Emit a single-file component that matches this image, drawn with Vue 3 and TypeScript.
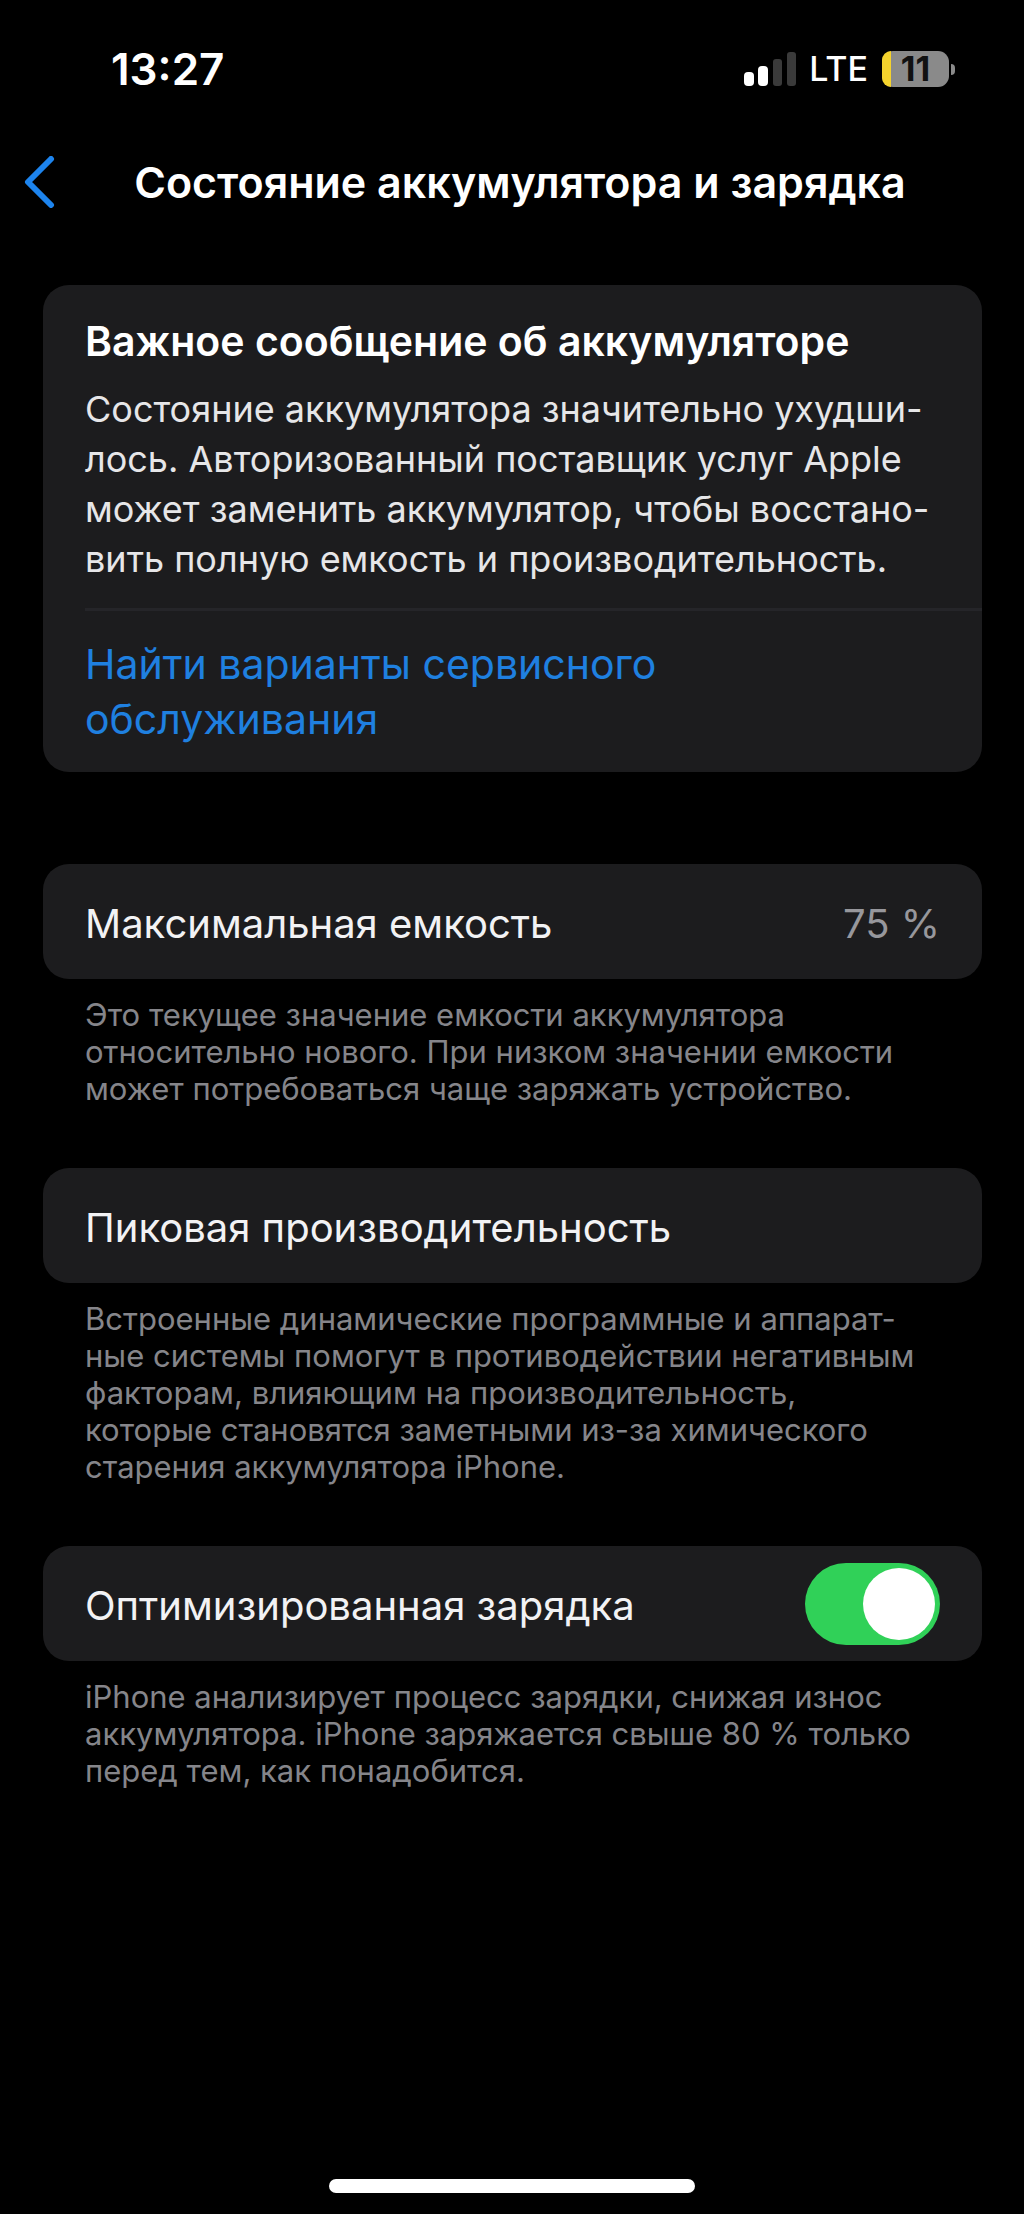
<script setup lang="ts">
import { ref } from 'vue'

const optimizedCharging = ref(true)
const batteryLevel = 11

const notice =
  'Состояние аккумулятора значительно ухудши-\nлось. Авторизованный поставщик услуг Apple\nможет заменить аккумулятор, чтобы восстано-\nвить полную емкость и производительность.'
const capacityNote =
  'Это текущее значение емкости аккумулятора\nотносительно нового. При низком значении емкости\nможет потребоваться чаще заряжать устройство.'
const peakNote =
  'Встроенные динамические программные и аппарат-\nные системы помогут в противодействии негативным\nфакторам, влияющим на производительность,\nкоторые становятся заметными из-за химического\nстарения аккумулятора iPhone.'
const chargingNote =
  'iPhone анализирует процесс зарядки, снижая износ\nаккумулятора. iPhone заряжается свыше 80 % только\nперед тем, как понадобится.'
</script>

<template>
  <div class="screen">
    <div class="status">
      <span class="time">13:27</span>
      <div class="indicators">
        <svg class="signal" width="54" height="36" viewBox="0 0 54 36" aria-hidden="true">
          <rect x="0" y="21" width="10" height="14" rx="4" fill="#fff" />
          <rect x="14" y="15" width="10" height="20" rx="4" fill="#fff" />
          <rect x="29" y="8" width="9" height="27" rx="3" fill="#3a3a3a" />
          <rect x="43" y="1" width="9" height="34" rx="3" fill="#3a3a3a" />
        </svg>
        <span class="network">LTE</span>
        <div class="battery">
          <div class="cell">
            <div class="charge" :style="{ width: batteryLevel + 3 + '%' }"></div>
            <span class="level">{{ batteryLevel }}</span>
          </div>
          <div class="terminal"></div>
        </div>
      </div>
    </div>

    <header class="nav">
      <button class="back" type="button" aria-label="Назад">
        <svg width="32" height="52" viewBox="0 0 32 52" fill="none" aria-hidden="true">
          <path
            d="M27 3 L4 26 L27 49"
            stroke="#1d84ee"
            stroke-width="6"
            stroke-linecap="round"
            stroke-linejoin="round"
          />
        </svg>
      </button>
      <h1 class="title">Состояние аккумулятора и зарядка</h1>
    </header>

    <main class="content">
      <section class="card message">
        <div class="message-text">
          <h2 class="heading">Важное сообщение об аккумуляторе</h2>
          <p class="body">{{ notice }}</p>
        </div>
        <div class="message-action">
          <a class="link" href="#service">Найти варианты сервисного<br />обслуживания</a>
        </div>
      </section>

      <section class="group">
        <div class="card row">
          <span class="label">Максимальная емкость</span>
          <span class="value">75 %</span>
        </div>
        <p class="note">{{ capacityNote }}</p>
      </section>

      <section class="group">
        <div class="card row">
          <span class="label">Пиковая производительность</span>
        </div>
        <p class="note">{{ peakNote }}</p>
      </section>

      <section class="group">
        <div class="card row">
          <label class="label" for="optimized">Оптимизированная зарядка</label>
          <input id="optimized" v-model="optimizedCharging" class="toggle" type="checkbox" role="switch" />
        </div>
        <p class="note">{{ chargingNote }}</p>
      </section>
    </main>

    <div class="home"></div>
  </div>
</template>

<style>
body {
  margin: 0;
  background: #000;
}
</style>

<style scoped>
.screen {
  display: flex;
  flex-direction: column;
  box-sizing: border-box;
  min-height: 100vh;
  padding-bottom: 21px;
  background: #000;
  color: #f2f2f4;
  font-family: Inter, "Liberation Sans", sans-serif;
}

.status {
  display: flex;
  align-items: center;
  justify-content: space-between;
  height: 60px;
  padding: 39px 69px 0 111px;
}

.time {
  color: #fff;
  font-size: 44px;
  font-weight: 600;
  line-height: 60px;
}

.indicators {
  display: flex;
  align-items: center;
}

.network {
  margin: 0 14px 0 11px;
  color: #fff;
  font-size: 34px;
  font-weight: 500;
  line-height: 60px;
}

.battery {
  display: flex;
  align-items: center;
  gap: 2px;
}

.cell {
  position: relative;
  display: flex;
  align-items: center;
  justify-content: center;
  width: 67px;
  height: 36px;
  border-radius: 11px;
  background: #8a8a8a;
}

.charge {
  position: absolute;
  top: 0;
  bottom: 0;
  left: 0;
  border-radius: 11px 0 0 11px;
  background: #f5d32d;
}

.level {
  position: relative;
  color: #111;
  font-size: 34px;
  font-weight: 700;
  line-height: 44px;
}

.terminal {
  width: 4px;
  height: 11px;
  border-radius: 0 4px 4px 0;
  background: #8a8a8a;
}

.nav {
  display: flex;
  align-items: center;
  height: 60px;
  margin-top: 53px;
  padding: 0 40px 0 24px;
}

.back {
  display: flex;
  padding: 0;
  border: 0;
  background: none;
  cursor: pointer;
}

.title {
  flex: 1;
  margin: 0;
  color: #fff;
  font-size: 43px;
  font-weight: 600;
  line-height: 60px;
  text-align: center;
  white-space: nowrap;
}

.content {
  padding: 0 42px 0 43px;
  margin-top: 73px;
}

.card {
  border-radius: 26px;
  background: #1c1c1e;
}

.message {
  margin-bottom: 92px;
}

.message-text {
  padding: 30px 40px 24px 42px;
}

.heading {
  margin: 0 0 17px;
  color: #fff;
  font-size: 41px;
  font-weight: 600;
  line-height: 52px;
  white-space: nowrap;
}

.body {
  margin: 0;
  color: #e6e6e8;
  font-size: 36px;
  line-height: 50px;
  white-space: pre;
}

.message-action {
  margin-left: 42px;
  padding: 26px 0 25px;
  border-top: 3px solid #252529;
}

.link {
  display: block;
  color: #1f80e0;
  font-size: 41px;
  line-height: 55px;
  text-decoration: none;
}

.group {
  margin-bottom: 61px;
}

.row {
  display: flex;
  align-items: center;
  justify-content: space-between;
  height: 115px;
  padding: 0 42px;
}

.label,
.value {
  padding-top: 4px;
  font-size: 40px;
  line-height: 56px;
  white-space: nowrap;
}

.value {
  color: #97979c;
}

.note {
  margin: 17px 0 0;
  padding-left: 42px;
  color: #85858a;
  font-size: 31px;
  line-height: 37px;
  white-space: pre;
}

.toggle {
  width: 135px;
  height: 82px;
  margin: 0;
  padding: 5px;
  box-sizing: border-box;
  appearance: none;
  border-radius: 41px;
  background: #39393d;
  cursor: pointer;
}

.toggle::before {
  content: "";
  display: block;
  width: 72px;
  height: 72px;
  border-radius: 50%;
  background: #fff;
}

.toggle:checked {
  background: #30d158;
}

.toggle:checked::before {
  margin-left: auto;
}

.home {
  align-self: center;
  width: 366px;
  height: 14px;
  margin-top: auto;
  border-radius: 7px;
  background: #fff;
}
</style>
